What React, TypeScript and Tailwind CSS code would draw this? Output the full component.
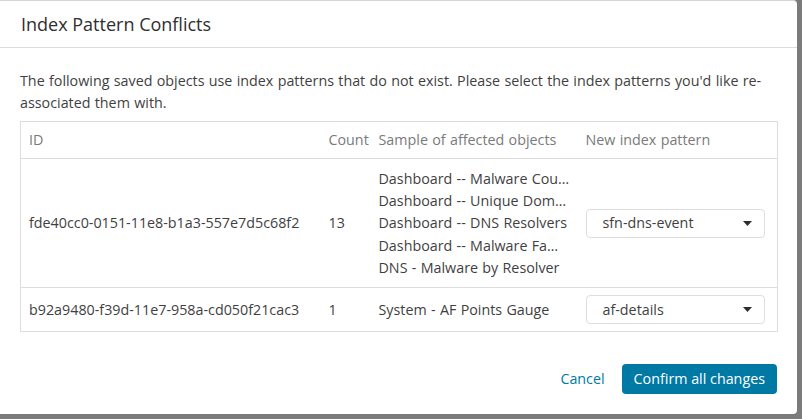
import React from "react";

type Conflict = {
  id: string;
  count: number;
  samples: string[];
  pattern: string;
};

const conflicts: Conflict[] = [
  {
    id: "fde40cc0-0151-11e8-b1a3-557e7d5c68f2",
    count: 13,
    samples: [
      "Dashboard -- Malware Count by Family",
      "Dashboard -- Unique Domains",
      "Dashboard -- DNS Resolvers",
      "Dashboard -- Malware Family",
      "DNS - Malware by Resolver",
    ],
    pattern: "sfn-dns-event",
  },
  {
    id: "b92a9480-f39d-11e7-958a-cd050f21cac3",
    count: 1,
    samples: ["System - AF Points Gauge"],
    pattern: "af-details",
  },
];

function PatternSelect({ value }: { value: string }) {
  return (
    <div className="flex h-[29px] w-[179px] items-center justify-between rounded-[4px] border border-[#dedede] bg-white pl-[16px] pr-[12px]">
      <span>{value}</span>
      <svg width="9" height="5" viewBox="0 0 9 5">
        <path d="M0 0h9L4.5 5z" fill="#2d2d2d" />
      </svg>
    </div>
  );
}

export default function App() {
  return (
    <div
      className="h-screen w-full bg-[#7b7b7b] text-[14.3px] text-[#3f3f3f] [word-spacing:0.6px]"
      style={{ fontFamily: '"Open Sans", "Noto Sans", sans-serif' }}
    >
      <div className="flex h-[414px] w-[797px] flex-col rounded-r-[4px] border-t border-[#d4d4d4] bg-white">
        <div className="flex h-[47px] items-center border-b border-[#dcdcdc] px-[21px] text-[18px] text-[#2f2f2f] [word-spacing:0px]">
          Index Pattern Conflicts
        </div>

        <div className="px-[20px] pt-[22px]">
          <p className="mb-[7px] leading-[22px]">
            The following saved objects use index patterns that do not exist. Please select the index patterns
            you'd like re-associated them with.
          </p>

          <table className="w-[758px] border-collapse border border-[#dddddd]">
            <thead>
              <tr className="h-[37px] text-left text-[#7a7a7a]">
                <th className="w-[300px] pl-[8px] font-normal">ID</th>
                <th className="w-[50px] pl-[8px] font-normal">Count</th>
                <th className="w-[207px] pl-[8px] font-normal">Sample of affected objects</th>
                <th className="pl-[8px] font-normal">New index pattern</th>
              </tr>
            </thead>
            <tbody>
              {conflicts.map((c) => (
                <tr key={c.id} className="border-t border-[#dddddd]">
                  <td className="pl-[8px]">{c.id}</td>
                  <td className="pl-[8px]">{c.count}</td>
                  <td className="pt-[9px] pb-[8px] pl-[8px]">
                    {c.samples.map((s) => (
                      <div key={s} className="w-[192px] truncate leading-[22.2px]">
                        {s}
                      </div>
                    ))}
                  </td>
                  <td className="py-[7px] pl-[8px]">
                    <PatternSelect value={c.pattern} />
                  </td>
                </tr>
              ))}
            </tbody>
          </table>
        </div>

        <div className="mt-[32px] flex items-center justify-end gap-[17px] pr-[20px]">
          <button className="text-[#0079a5]">Cancel</button>
          <button className="h-[30px] rounded-[4px] bg-[#0079a5] px-[12px] text-white">Confirm all changes</button>
        </div>
      </div>
    </div>
  );
}
